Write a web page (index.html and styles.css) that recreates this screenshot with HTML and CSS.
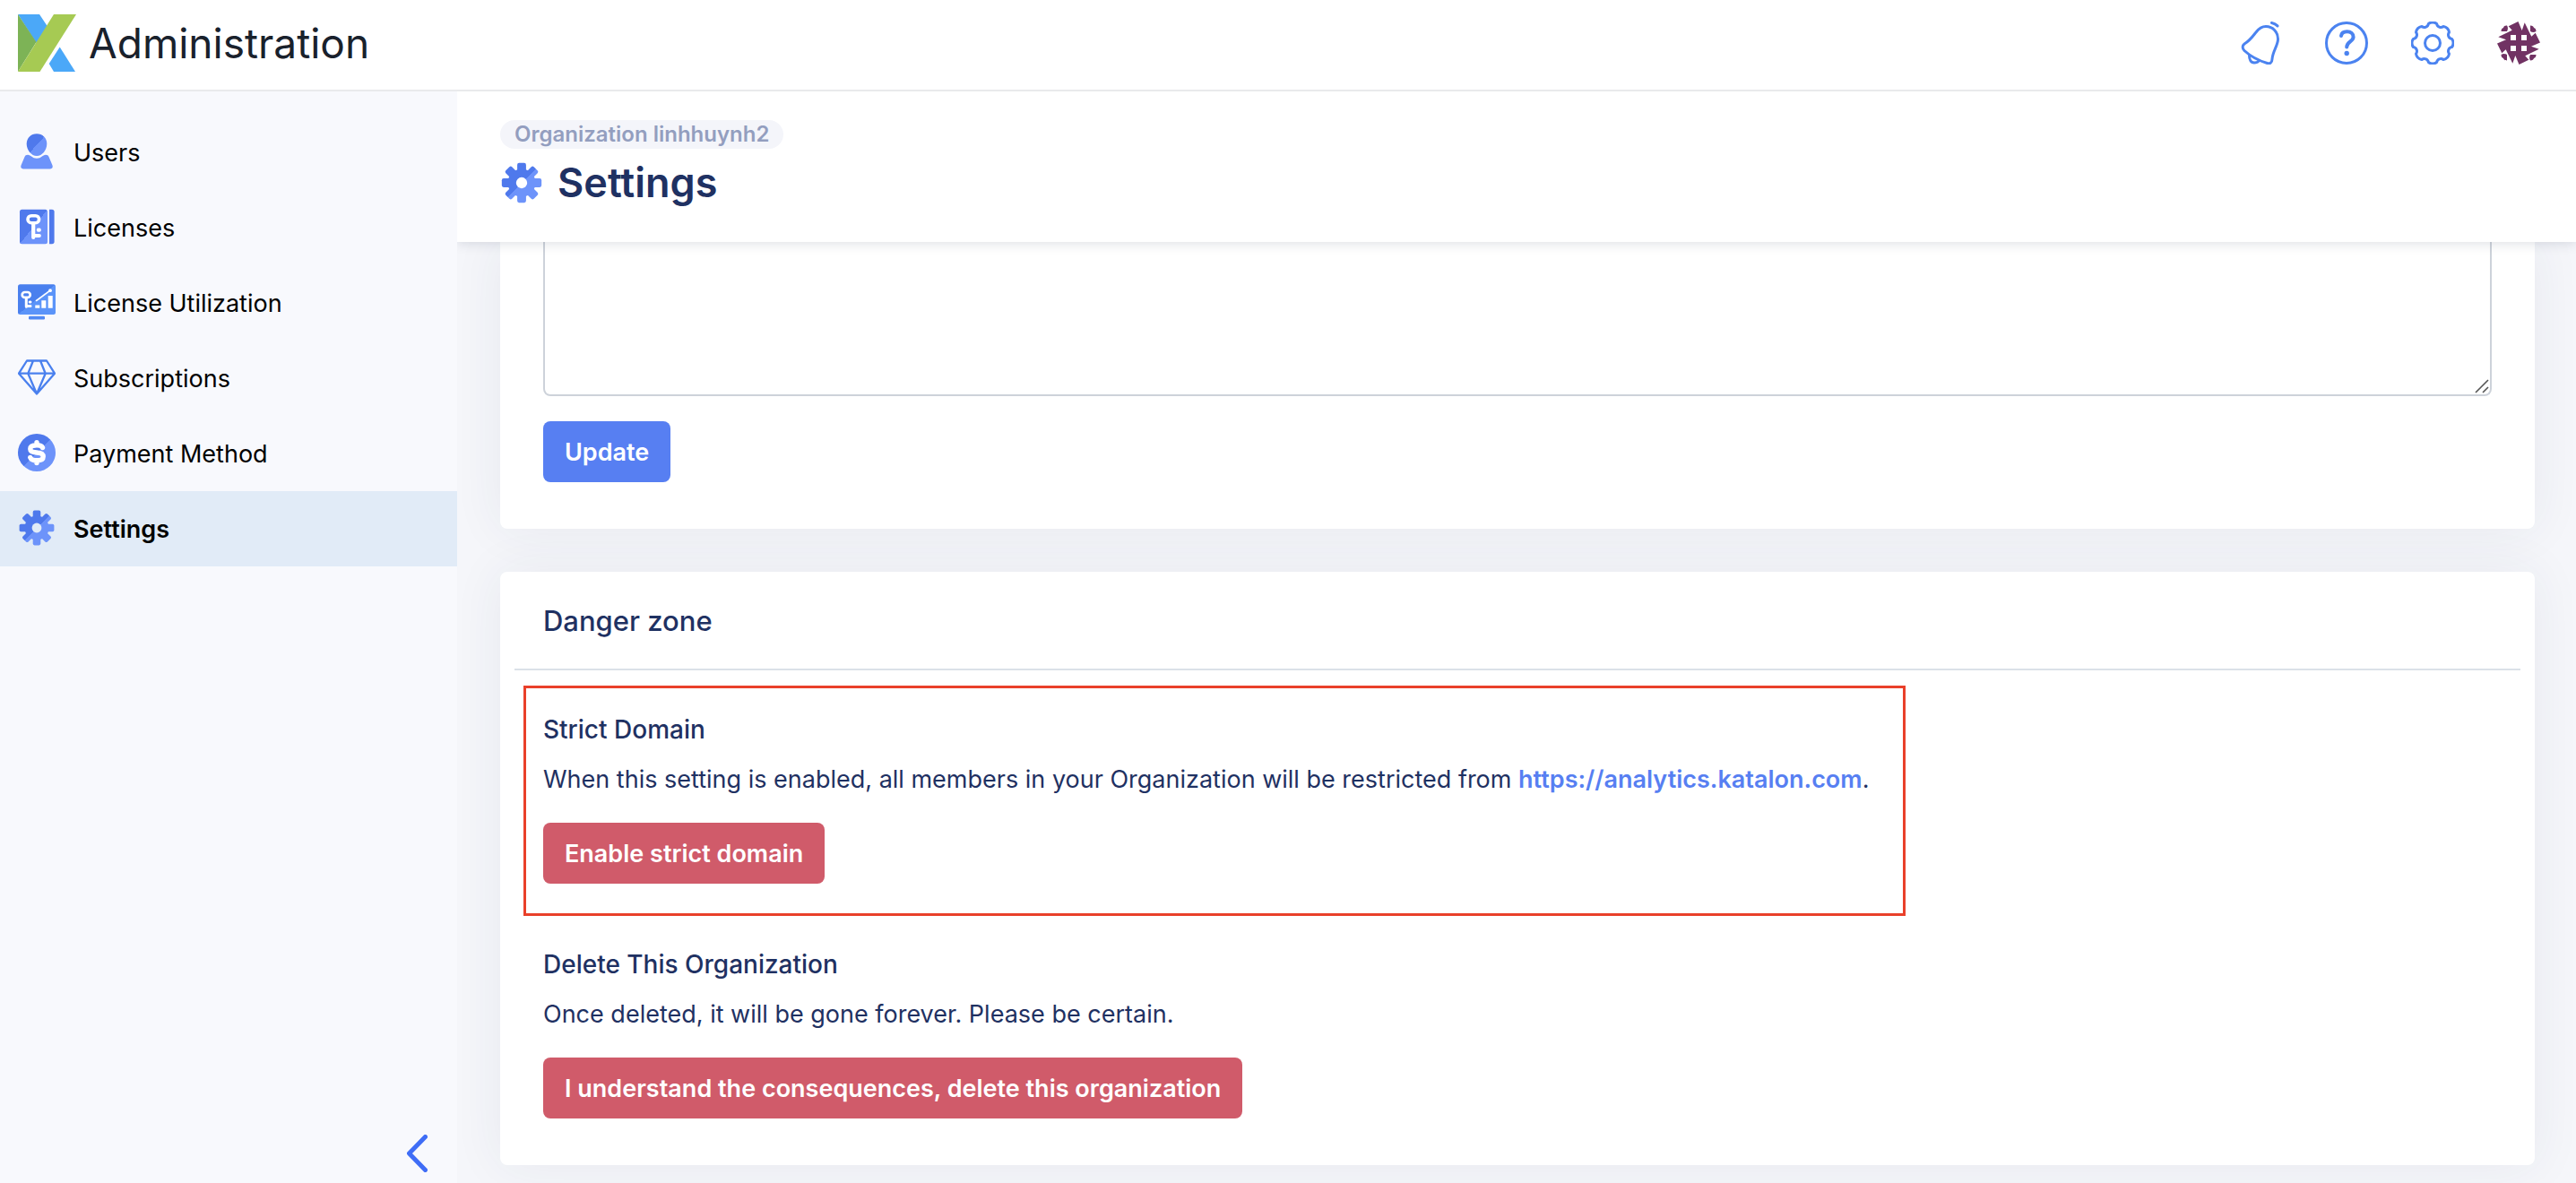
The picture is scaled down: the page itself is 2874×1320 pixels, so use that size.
FILE: index.html
```html
<!DOCTYPE html>
<html lang="en">
<head>
<meta charset="utf-8">
<title>Administration - Settings</title>
<link rel="stylesheet" href="styles.css">
</head>
<body>
<svg class="defs" aria-hidden="true">
  <defs>
    <linearGradient id="split" x1="0" y1="0" x2="1" y2="1">
      <stop offset="0.5" stop-color="#4f79ec"/>
      <stop offset="0.5" stop-color="#6d93fa"/>
    </linearGradient>
    <linearGradient id="split-screen" x1="0" y1="0" x2="1" y2="1">
      <stop offset="0.5" stop-color="#4a80ee"/>
      <stop offset="0.5" stop-color="#5b94f9"/>
    </linearGradient>
    <symbol id="gear" viewBox="0 0 42 42">
      <mask id="gear-mask">
        <g fill="#fff">
          <circle cx="21" cy="21" r="13.5"/>
          <rect x="16.7" y="1.6" width="8.6" height="38.8" rx="1.8"/>
          <rect x="16.7" y="1.6" width="8.6" height="38.8" rx="1.8" transform="rotate(45 21 21)"/>
          <rect x="16.7" y="1.6" width="8.6" height="38.8" rx="1.8" transform="rotate(90 21 21)"/>
          <rect x="16.7" y="1.6" width="8.6" height="38.8" rx="1.8" transform="rotate(135 21 21)"/>
        </g>
        <circle cx="21" cy="21" r="5.4" fill="#000"/>
      </mask>
      <rect width="42" height="42" fill="url(#split)" mask="url(#gear-mask)"/>
    </symbol>
  </defs>
</svg>

<header class="topbar">
  <a class="brand" href="#">
    <svg class="brand-logo" viewBox="0 0 65 64" aria-hidden="true">
      <path fill="#4ba8f8" d="M0 0H24L33 13.500L20.500 32Z"/>
      <path fill="#7db356" d="M0 0V64L20.500 31Z"/>
      <path fill="#a6ca53" d="M40 0H65L24.500 64H0Z"/>
      <path fill="#4ba8f8" d="M46.700 36.500L64 64H40L34.700 55Z"/>
    </svg>
    <span class="brand-name">Administration</span>
  </a>
  <div class="actions">
    <button class="icon-button" aria-label="Notifications">
      <svg viewBox="0 0 48 48" class="outline">
        <path d="M30 5.500C38 5.500 43.500 12 43.500 19.500C43.500 27 37.500 33 37 42C36.800 46 34.500 47.500 31.500 46.500C20 43 13 39 6 32.500C3.500 30 3.500 27 6 25C12 21.500 15 17 19 12C22 8 25 5.500 30 5.500Z"/>
        <path d="M11.500 38C11.500 42 13 46 17 46C19.500 46 21 45.500 22 44M36.500 1.500C39 2 41.500 3.200 43 5"/>
      </svg>
    </button>
    <button class="icon-button" aria-label="Help">
      <svg viewBox="0 0 48 48" class="outline">
        <circle cx="24" cy="24" r="22.500"/>
        <path class="thick" d="M18 16C18.500 12.800 21 11.300 24.500 11.300C29 11.300 31.600 13.700 31.600 17.300C31.600 22.500 24.200 22.500 24.200 28.500"/>
        <circle class="dot" cx="24.200" cy="35.500" r="2.700"/>
      </svg>
    </button>
    <button class="icon-button" aria-label="Configuration">
      <svg viewBox="-24 -24 48 48" class="outline">
        <path d="M-4.600 -21.500A8 8 0 0 1 4.600 -21.500A4.600 4.600 0 0 0 12 -18.500A8 8 0 0 1 18.500 -12A4.600 4.600 0 0 0 21.500 -4.600A8 8 0 0 1 21.500 4.600A4.600 4.600 0 0 0 18.500 12A8 8 0 0 1 12 18.500A4.600 4.600 0 0 0 4.600 21.500A8 8 0 0 1 -4.600 21.500A4.600 4.600 0 0 0 -12 18.500A8 8 0 0 1 -18.500 12A4.600 4.600 0 0 0 -21.500 4.600A8 8 0 0 1 -21.500 -4.600A4.600 4.600 0 0 0 -18.500 -12A8 8 0 0 1 -12 -18.500A4.600 4.600 0 0 0 -4.600 -21.500Z"/>
        <circle r="8.500"/>
      </svg>
    </button>
    <button class="icon-button" aria-label="Account">
      <svg viewBox="0 0 48 48" fill="#713263">
        <path d="M23.500 0L27.700 10L30.700 1.300L38.300 16.700L42.700 12.700L48 23.500L38 27.700L46.700 30.700L31.300 38.300L35.300 42.700L24.500 48L20.300 38L17.300 46.700L9.700 31.300L5.300 35.300L0 24.500L10 20.300L1.300 17.300L16.700 9.700L12.700 5.300Z"/>
        <path id="petal" d="M4.500 11C4.500 8.500 5.500 7.500 7 7C7.500 5.500 8.500 4.500 11 4.500C12.500 7 12 9 11 11Z"/>
        <use href="#petal" transform="rotate(90 24 24)"/>
        <use href="#petal" transform="rotate(180 24 24)"/>
        <use href="#petal" transform="rotate(270 24 24)"/>
        <path fill="#fff" d="M15 15h6v6h-6zM27 15h6v6h-6zM15 27h6v6h-6zM27 27h6v6h-6z"/>
      </svg>
    </button>
  </div>
</header>

<div class="shell">
  <aside class="sidebar">
    <nav class="nav">
      <a class="nav-item" href="#">
        <svg class="nav-icon" viewBox="0 0 42 42">
          <path fill="url(#split)" d="M21 1.300C27.500 1.300 32.300 6 32.300 12.500C32.300 19.500 27 26 21 26C15 26 9.700 19.500 9.700 12.500C9.700 6 14.500 1.300 21 1.300Z"/>
          <path fill="#6d93fa" d="M11 24.700C14.500 24.700 16 28.700 21 28.700C26 28.700 27.500 24.700 31 24.700C33 24.700 33.800 25.500 34.500 27L38.500 36.500C39.300 38.700 38.300 40.400 36 40.400H6C3.700 40.400 2.700 38.700 3.500 36.500L7.500 27C8.200 25.500 9 24.700 11 24.700Z"/>
        </svg>
        Users
      </a>
      <a class="nav-item" href="#">
        <svg class="nav-icon" viewBox="0 0 42 42">
          <rect x="2" y="1.700" width="31" height="38.600" rx="2.500" fill="url(#split)"/>
          <path fill="#4f79ec" d="M35 1.700H38C39.700 1.700 40.600 2.700 40.600 4.200V37.800C40.600 39.300 39.700 40.300 38 40.300H35Z"/>
          <g fill="none" stroke="#fff" stroke-linecap="round">
            <rect x="11" y="8.700" width="12.600" height="8" rx="4" stroke-width="3.600"/>
            <path stroke-width="4.200" d="M17.200 18V33M18 31H23.800M22.800 24.700H23.800"/>
          </g>
        </svg>
        Licenses
      </a>
      <a class="nav-item" href="#">
        <svg class="nav-icon" viewBox="0 0 42 42">
          <rect y="1.300" width="42" height="33.700" rx="2.500" fill="url(#split-screen)"/>
          <rect x="12" y="36.800" width="18" height="3.600" rx="1.200" fill="#5189f3"/>
          <g fill="none" stroke="#fff" stroke-linecap="round">
            <rect x="4.700" y="10" width="9" height="5.800" rx="2.900" stroke-width="2.700"/>
            <path stroke-width="3" d="M9.300 16.500V26.300M10 25.500H14M13.200 21H14"/>
            <path stroke-width="1.600" d="M20.500 19.500L36 8.200"/>
          </g>
          <circle cx="36" cy="8.200" r="1.900" fill="#fff"/>
          <path fill="#fff" d="M19.300 24.500h5v3.200h-5zM26.300 19.300h5v8.400h-5zM33.700 14h5v13.700h-5z"/>
        </svg>
        License Utilization
      </a>
      <a class="nav-item" href="#">
        <svg class="nav-icon" viewBox="0 0 42 42">
          <path fill="none" stroke="#4a80ee" stroke-width="2.300" stroke-linejoin="round" d="M10 2.500H32L41 16.700L21 39.500L1 16.700ZM1 16.700H41M17 2.500L11.300 16.700L21 39.500L30.700 16.700L25 2.500"/>
        </svg>
        Subscriptions
      </a>
      <a class="nav-item" href="#">
        <svg class="nav-icon" viewBox="0 0 42 42">
          <circle cx="21" cy="21" r="21" fill="url(#split)"/>
          <path fill="none" stroke="#fff" stroke-width="5.400" stroke-linecap="round" stroke-linejoin="round" d="M27.500 15.500C26.500 13.500 24.500 12.800 21 12.800C16.500 12.800 13.800 14 13.800 17C13.800 20 16.500 20.700 21 21C25.500 21.300 28.200 22.300 28.200 25.500C28.200 28.500 25.500 29.800 21 29.800C17.300 29.800 14.800 29 13.800 26.500M21 9.700V12.500M21 30V32.500"/>
        </svg>
        Payment Method
      </a>
      <a class="nav-item nav-item-active" href="#" aria-current="page">
        <svg class="nav-icon"><use href="#gear"/></svg>
        Settings
      </a>
    </nav>
    <button class="collapse" aria-label="Collapse sidebar">
      <svg viewBox="0 0 24 42"><path fill="none" stroke="#3f6df6" stroke-width="5" stroke-linecap="round" stroke-linejoin="round" d="M21.500 2.500L3.500 21L21.500 39.500"/></svg>
    </button>
  </aside>

  <main class="main">
    <header class="page-header">
      <span class="badge">Organization linhhuynh2</span>
      <h1 class="page-title">
        <svg class="title-icon"><use href="#gear"/></svg>
        Settings
      </h1>
    </header>

    <div class="content">
      <form class="card card-scrolled">
        <div class="field">
          <textarea class="textarea" aria-label="Organization details"></textarea>
          <svg class="grip" viewBox="0 0 16 16" aria-hidden="true"><path fill="none" stroke="#555" stroke-width="1.600" d="M1 15L15 1M9 15L15 9"/></svg>
        </div>
        <button class="button button-primary" type="button">Update</button>
      </form>

      <section class="card">
        <h2 class="card-title">Danger zone</h2>
        <div class="setting setting-highlight">
          <h3 class="setting-title">Strict Domain</h3>
          <p class="setting-text">When this setting is enabled, all members in your Organization will be restricted from <a class="link" href="#">https://analytics.katalon.com</a>.</p>
          <button class="button button-danger" type="button">Enable strict domain</button>
        </div>
        <div class="setting">
          <h3 class="setting-title">Delete This Organization</h3>
          <p class="setting-text">Once deleted, it will be gone forever. Please be certain.</p>
          <button class="button button-danger" type="button">I understand the consequences, delete this organization</button>
        </div>
      </section>
    </div>
  </main>
</div>
</body>
</html>
```
FILE: styles.css
```css
* {
  box-sizing: border-box;
}

body {
  display: flex;
  flex-direction: column;
  height: 100vh;
  margin: 0;
  overflow: hidden;
  background: #fff;
  color: #1f3162;
  font: 400 27px/40px Inter, "Liberation Sans", sans-serif;
}

h1, h2, h3, p {
  margin: 0;
}

button {
  border: 0;
  font: inherit;
  cursor: pointer;
}

svg {
  display: block;
}

.defs {
  position: absolute;
  width: 0;
  height: 0;
}

/* Top bar */
.topbar {
  display: flex;
  flex: none;
  align-items: center;
  justify-content: space-between;
  padding: 16px 40px 20px 20px;
  border-bottom: 2px solid #e9eaec;
}

.brand {
  display: flex;
  align-items: center;
  gap: 14px;
  color: #19212c;
  text-decoration: none;
}

.brand-logo {
  width: 65px;
  height: 64px;
}

.brand-name {
  font-size: 46px;
  line-height: 64px;
}

.actions {
  display: flex;
  gap: 48px;
}

.icon-button {
  width: 48px;
  height: 48px;
  padding: 0;
  background: none;
}

.outline {
  fill: none;
  stroke: #4b83f0;
  stroke-width: 3;
  stroke-linecap: round;
  stroke-linejoin: round;
}

.outline .thick {
  stroke-width: 4;
}

.outline .dot {
  fill: #4b83f0;
  stroke: none;
}

/* Sidebar */
.shell {
  display: flex;
  flex: 1;
  min-height: 0;
}

.sidebar {
  display: flex;
  flex: none;
  flex-direction: column;
  justify-content: space-between;
  width: 510px;
  padding: 26px 0 12px;
  background: #f8f9fd;
}

.nav-item {
  display: flex;
  align-items: center;
  gap: 20px;
  height: 84px;
  padding: 2px 20px 0;
  color: #000;
  text-decoration: none;
}

.nav-item-active {
  background: #e1ebf7;
  font-weight: 600;
}

.nav-icon {
  width: 42px;
  height: 42px;
  margin-bottom: 4px;
}

.collapse {
  align-self: flex-end;
  width: 24px;
  height: 42px;
  margin-right: 33px;
  padding: 0;
  background: none;
}

/* Page */
.main {
  display: flex;
  flex: 1;
  flex-direction: column;
  min-width: 0;
  overflow: hidden;
  background: #f5f6fa;
}

.page-header {
  z-index: 1;
  display: flex;
  flex-direction: column;
  align-items: flex-start;
  gap: 8px;
  padding: 32px 48px 36px;
  background: #fff;
  box-shadow: 0 2px 12px rgba(31, 40, 70, 0.14);
}

.badge {
  padding: 0 16px;
  border-radius: 16px;
  background: #f4f5fa;
  color: #939ebf;
  font-size: 24px;
  font-weight: 600;
  line-height: 32px;
}

.page-title {
  display: flex;
  align-items: center;
  gap: 16px;
  font-size: 45px;
  font-weight: 600;
  line-height: 60px;
}

.title-icon {
  width: 48px;
  height: 48px;
}

.content {
  display: flex;
  flex: 1;
  flex-direction: column;
  gap: 48px;
  min-height: 0;
  padding: 0 46px 20px 48px;
  overflow: hidden;
}

.card {
  padding: 0 16px 52px;
  border-radius: 8px;
  background: #fff;
  box-shadow: 0 0 56px rgba(40, 60, 90, 0.07);
}

.card-scrolled {
  padding: 0 48px 52px;
  border-radius: 0 0 8px 8px;
}

.field {
  position: relative;
  margin-bottom: 28px;
}

.textarea {
  display: block;
  width: 100%;
  height: 172px;
  padding: 12px 24px;
  border: 2px solid #cdd2da;
  border-top: 0;
  border-radius: 0 0 8px 8px;
  background: #fff;
  color: inherit;
  font: inherit;
  resize: none;
}

.grip {
  position: absolute;
  right: 3px;
  bottom: 3px;
  width: 16px;
  height: 16px;
}

.button {
  padding: 15px 24px 13px;
  border-radius: 8px;
  color: #fff;
  font-size: 27px;
  font-weight: 600;
  line-height: 40px;
}

.button-primary {
  background: #577ff2;
}

.button-danger {
  background: #d05b6a;
}

.card-title {
  margin-bottom: 17px;
  padding: 35px 32px 33px;
  border-bottom: 2px solid #dbe1e8;
  font-size: 31px;
  font-weight: 500;
}

.setting {
  padding: 34px 32px 0;
}

.setting-highlight {
  width: fit-content;
  margin-left: 10px;
  padding: 26px 38px 33px 19px;
  border: 3px solid #e9402a;
}

.setting-title {
  margin-bottom: 16px;
  font-size: 28px;
  font-weight: 500;
}

.setting-text {
  margin-bottom: 28px;
}

.link {
  color: #577ff2;
  font-weight: 600;
  text-decoration: none;
}
```
